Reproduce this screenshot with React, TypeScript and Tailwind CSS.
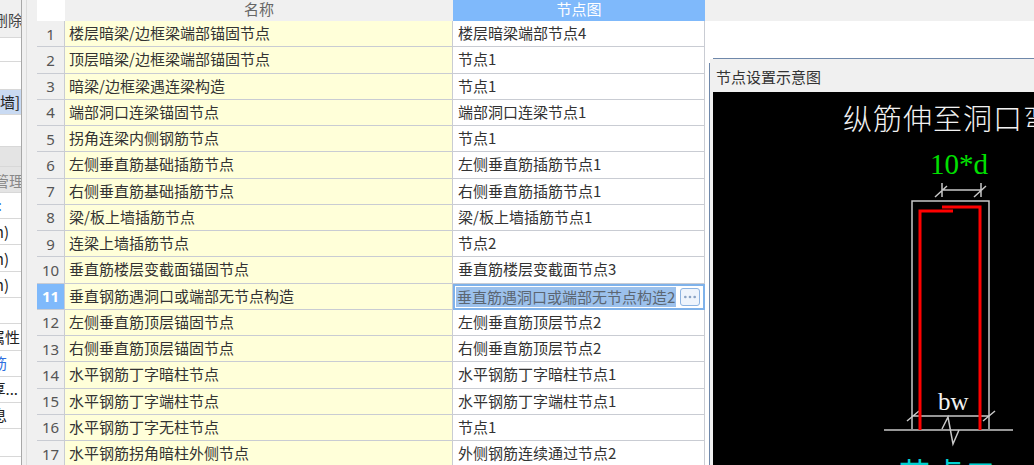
import React from 'react'
import { Ellipsis } from 'lucide-react'

const rows = [
  ['楼层暗梁/边框梁端部锚固节点', '楼层暗梁端部节点4'],
  ['顶层暗梁/边框梁端部锚固节点', '节点1'],
  ['暗梁/边框梁遇连梁构造', '节点1'],
  ['端部洞口连梁锚固节点', '端部洞口连梁节点1'],
  ['拐角连梁内侧钢筋节点', '节点1'],
  ['左侧垂直筋基础插筋节点', '左侧垂直筋插筋节点1'],
  ['右侧垂直筋基础插筋节点', '右侧垂直筋插筋节点1'],
  ['梁/板上墙插筋节点', '梁/板上墙插筋节点1'],
  ['连梁上墙插筋节点', '节点2'],
  ['垂直筋楼层变截面锚固节点', '垂直筋楼层变截面节点3'],
  ['垂直钢筋遇洞口或端部无节点构造', '垂直筋遇洞口或端部无节点构造2'],
  ['左侧垂直筋顶层锚固节点', '左侧垂直筋顶层节点2'],
  ['右侧垂直筋顶层锚固节点', '右侧垂直筋顶层节点2'],
  ['水平钢筋丁字暗柱节点', '水平钢筋丁字暗柱节点1'],
  ['水平钢筋丁字端柱节点', '水平钢筋丁字端柱节点1'],
  ['水平钢筋丁字无柱节点', '节点1'],
  ['水平钢筋拐角暗柱外侧节点', '外侧钢筋连续通过节点2'],
]

const sideRows = [
  { h: 'h-[38px] pt-[4px]', bg: 'bg-[#f0f0f0]', text: '删除', cls: 'mr-[-2px] text-[#444]' },
  { h: 'h-[24px]', bg: 'bg-white', text: '', cls: '' },
  { h: 'h-[28px]', bg: 'bg-white', text: '', cls: '' },
  { h: 'h-[25px]', bg: 'bg-[#c9daf2]', text: '外墙]', cls: 'mr-[1px] text-[#222]' },
  { h: 'h-[32px]', bg: 'bg-white', text: '', cls: '' },
  { h: 'h-[20px]', bg: 'bg-[#e4e4e4]', text: '', cls: '' },
  { h: 'h-[26px] pt-[3px]', bg: 'bg-[#e4e4e4]', text: '配筋管理', cls: 'mr-[-3px] text-[#888]' },
  { h: 'h-[26px]', bg: 'bg-white', text: ':', cls: 'mr-[19px] text-[#2f6fe0]' },
  { h: 'h-[26px] pt-[2px]', bg: 'bg-white', text: '(mm)', cls: 'mr-[12px] text-[#222]' },
  { h: 'h-[27px] pt-[2px]', bg: 'bg-white', text: '(mm)', cls: 'mr-[12px] text-[#222]' },
  { h: 'h-[26px] pt-[2px]', bg: 'bg-white', text: '(mm)', cls: 'mr-[12px] text-[#222]' },
  { h: 'h-[26px]', bg: 'bg-white', text: '', cls: '' },
  { h: 'h-[27px] pt-[1px]', bg: 'bg-white', text: '属性', cls: 'mr-[1px] text-[#222]' },
  { h: 'h-[26px]', bg: 'bg-white', text: '钢筋', cls: 'mr-[14px] text-[#2f6fe0]' },
  { h: 'h-[26px]', bg: 'bg-white', text: '厚...', cls: 'mr-[3px] text-[#222]' },
  { h: 'h-[26px]', bg: 'bg-white', text: '信息', cls: 'mr-[14px] text-[#222]' },
  { h: 'h-[28px]', bg: 'bg-white', text: '', cls: '' },
]

function DetailDrawing() {
  return (
    <svg viewBox="713 92 321 373" width="321" height="373" className="block">
      <text x="843" y="130" fill="#f2f2f2" fontSize="29" letterSpacing="1" fontFamily="'Noto Sans CJK SC', sans-serif" fontWeight="300">
        纵筋伸至洞口弯
      </text>
      <text x="930" y="174" fill="#00e000" fontSize="29" fontFamily="'Liberation Serif', serif">
        10*d
      </text>
      <g stroke="#c8c8c8" strokeWidth="1.5" fill="none">
        <path d="M942 190H981M942 183V197M981 183V197M935 197L947 186M974 197L986 186" />
        <path d="M912 429V201H989V429" />
        <path d="M912 416H989M907 421L919 411M983 421L995 411" />
        <path d="M884 430H1013" />
        <path d="M942 429L948 417L953 444L959 430" />
      </g>
      <g stroke="#ff0000" strokeWidth="3" fill="none">
        <path d="M953 211H920V430" />
        <path d="M942 207H980V430" />
      </g>
      <text x="938" y="410" fill="#f2f2f2" fontSize="25" fontFamily="'Liberation Serif', serif">
        bw
      </text>
      <text x="899" y="485" fill="#00d0d0" fontSize="31" letterSpacing="2" fontFamily="'Noto Sans CJK SC', sans-serif">
        节点二
      </text>
    </svg>
  )
}

export default function App() {
  return (
    <div className="flex h-[465px] w-[1034px] overflow-hidden bg-white font-['Noto_Sans_CJK_SC',sans-serif] text-[15px] text-[#333]">
      {/* clipped left panel */}
      <div className="flex w-[22px] shrink-0 flex-col overflow-hidden border-r border-[#a8a8a8]">
        {sideRows.map((r, i) => (
          <div key={i} className={`flex shrink-0 items-center justify-end overflow-hidden whitespace-nowrap border-b border-[#d8d8d8] ${r.h} ${r.bg}`}>
            <span className={`shrink-0 ${r.cls}`}>{r.text}</span>
          </div>
        ))}
      </div>
      <div className="flex w-[15px] shrink-0 bg-[#f0f0f0]">
        <div className="w-[5px] border-r border-[#dcdcdc]" />
      </div>

      {/* node table */}
      <div className="flex w-[668px] shrink-0 flex-col">
        <div className="flex h-[21px] shrink-0 leading-[18px]">
          <div className="w-[28px] shrink-0 bg-white" />
          <div className="w-[388px] shrink-0 bg-[#f0f0f0] text-center text-[#666]">名称</div>
          <div className="flex-1 bg-[#7fb9fb] text-center text-white">节点图</div>
        </div>
        {rows.map((row, i) => {
          const selected = i === 10
          return (
            <div key={i} className="flex h-[26.25px] shrink-0 leading-[24px]">
              <div className={`flex w-[28px] shrink-0 items-center justify-center border-b border-r border-[#c9ccd3] font-['Noto_Sans',sans-serif] ${selected ? 'bg-[#7fb9fb] font-bold text-white' : 'bg-[#f0f0f0] text-[#555]'}`}>
                {i + 1}
              </div>
              <div className="w-[388px] shrink-0 whitespace-nowrap border-b border-r border-[#c9ccd3] bg-[#ffffd9] pl-[4px]">
                {row[0]}
              </div>
              {selected ? (
                <div className="flex flex-1 items-center border-2 border-[#7fb2ea] bg-white pl-[1px] pr-[2px]">
                  <span className="h-[20px] w-[220px] shrink-0 whitespace-nowrap bg-[#9cc1ec] pl-[1px] leading-[20px] text-[#5b6672]">{row[1]}</span>
                  <button className="ml-[4px] flex h-[18px] w-[20px] items-center justify-center rounded-[3px] border border-[#8db4e2] bg-[#eef4fc]">
                    <Ellipsis size={16} strokeWidth={2} className="text-[#8aa3c4]" />
                  </button>
                </div>
              ) : (
                <div className="flex-1 whitespace-nowrap border-b border-r border-[#c9ccd3] bg-white pl-[5px]">{row[1]}</div>
              )}
            </div>
          )
        })}
      </div>

      {/* preview panel */}
      <div className="flex min-w-0 flex-1 flex-col">
        <div className="h-[21px] shrink-0 bg-[#f0f0f0]" />
        <div className="h-[37px] shrink-0 bg-white" />
        <div className="flex min-h-0 flex-1 bg-white pl-[4px]">
          <div className="mt-[5px] w-[1px] shrink-0 bg-[#6f88aa]" />
          <div className="flex min-h-0 min-w-0 flex-1 flex-col">
            <div className="ml-[3px] h-[1px] shrink-0 bg-[#6f88aa]" />
            <div className="flex min-h-0 flex-1 flex-col bg-[#f0f0f0] pl-[3px]">
              <div className="h-[33px] shrink-0 pl-[3px] pt-[6px] leading-[24px]">节点设置示意图</div>
              <div className="min-h-0 flex-1 overflow-hidden bg-black">
                <DetailDrawing />
              </div>
            </div>
          </div>
        </div>
      </div>
    </div>
  )
}
